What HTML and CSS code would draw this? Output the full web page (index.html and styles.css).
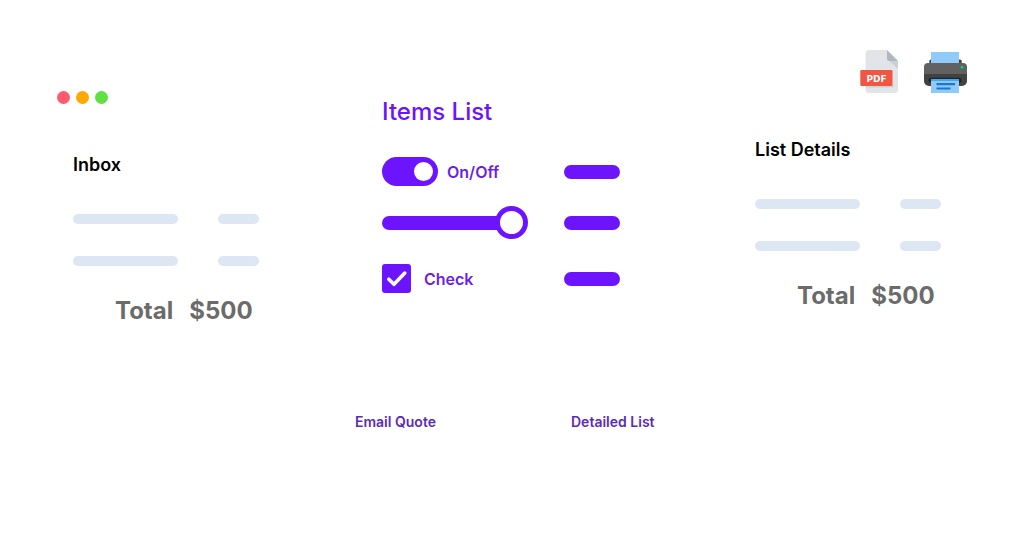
FILE: index.html
```html
<!DOCTYPE html>
<html lang="en">
<head>
<meta charset="utf-8">
<meta name="viewport" content="width=device-width, initial-scale=1">
<title>Items List</title>
<link rel="stylesheet" href="styles.css">
</head>
<body>
<main class="board">
  <section class="inbox">
    <div class="dots"><span class="dot dot-red"></span><span class="dot dot-amber"></span><span class="dot dot-green"></span></div>
    <div class="summary">
      <h2 class="summary-title">Inbox</h2>
      <div class="lines">
        <span class="line"></span><span class="line"></span>
        <span class="line"></span><span class="line"></span>
      </div>
      <p class="total"><span>Total</span><span>$500</span></p>
    </div>
  </section>

  <section class="items">
    <h1 class="items-title">Items List</h1>
    <div class="controls">
      <div class="control control-toggle">
        <input class="toggle" type="checkbox" role="switch" id="onoff" checked>
        <label class="label" for="onoff">On/Off</label>
        <span class="value"></span>
      </div>
      <div class="control control-slider">
        <input class="slider" type="range" aria-label="Amount" min="0" max="100" value="100">
        <span class="value"></span>
      </div>
      <div class="control control-check">
        <span class="checkwrap">
          <input class="check" type="checkbox" id="check" checked>
          <svg class="tick" viewBox="0 0 29 29" aria-hidden="true"><path d="M6.8 15.2 12 20.3 22.8 9"/></svg>
        </span>
        <label class="label" for="check">Check</label>
        <span class="value"></span>
      </div>
    </div>
    <nav class="links">
      <a class="link" href="#quote">Email Quote</a>
      <a class="link" href="#list">Detailed List</a>
    </nav>
  </section>

  <section class="details">
    <div class="actions">
      <button class="action" type="button" aria-label="Save as PDF">
        <svg width="38" height="43" viewBox="0 0 38 43">
          <path fill="#e2e5e7" d="M8 0h19l11 11v29a3 3 0 0 1-3 3H8.500a3 3 0 0 1-3-3V3A3 3 0 0 1 8 0z"/>
          <path fill="#cad1d8" d="M29 11h9v8z"/>
          <path fill="#b0b7bd" d="M27 0l11 11h-8.500a2.500 2.500 0 0 1-2.500-2.500z"/>
          <path fill="#cad1d8" d="M5.500 36h27v-2l1 0v2.500a1 1 0 0 1-1 1h-27z"/>
          <rect fill="#f15642" x=".3" y="20" width="32.200" height="16" rx="1.300"/>
          <text class="pdf-text" x="16.500" y="32" text-anchor="middle">PDF</text>
        </svg>
      </button>
      <button class="action" type="button" aria-label="Print">
        <svg width="43" height="43" viewBox="0 0 43 43">
          <path fill="#424242" d="M5.300 14V11q0-1.500 1.700-1.500h29q1.700 0 1.700 1.500v3z"/>
          <rect fill="#90caf9" x="7" y="2" width="28" height="12"/>
          <path fill="#424242" d="M0 23h43v8a5 5 0 0 1-5 5H5a5 5 0 0 1-5-5z"/>
          <path fill="#616161" d="M4 13h35a4 4 0 0 1 4 4v7H0v-7a4 4 0 0 1 4-4z"/>
          <path fill="#242424" d="M7 27.800h28q2.500 0 2.500 2.500T35 33H7q-2.500 0-2.500-2.700t2.500-2.500z"/>
          <circle fill="#00e676" cx="38" cy="17.300" r="1.200"/>
          <path fill="#90caf9" d="M7 29h28v14H7z"/>
          <path fill="#42a5f5" d="M7 29h28v2H7z"/>
          <path fill="#1976d2" d="M12.500 33h18.500v2.200H12.500zM12.500 37.400h14v2.200h-14z"/>
        </svg>
      </button>
    </div>
    <div class="summary">
      <h2 class="summary-title">List Details</h2>
      <div class="lines">
        <span class="line"></span><span class="line"></span>
        <span class="line"></span><span class="line"></span>
      </div>
      <p class="total"><span>Total</span><span>$500</span></p>
    </div>
  </section>
</main>
</body>
</html>
```
FILE: styles.css
```css
* { box-sizing: border-box; }

body {
  margin: 0;
  background: #fff;
  font-family: Inter, "Liberation Sans", sans-serif;
}

h1, h2, p { margin: 0; }
input { appearance: none; margin: 0; flex: none; }

.board {
  display: grid;
  grid-template-columns: 298fr 400fr 212fr;
  align-items: start;
  padding: 50px 44px 50px 57px;
}

/* Summary panels */
.inbox { padding: 41px 0 0; }
.inbox .summary { margin: 49px 0 0 16px; }

.dots { display: flex; gap: 6px; }
.dot { width: 13px; height: 13px; border-radius: 50%; }
.dot-red { background: #ff5a6e; }
.dot-amber { background: #ffa800; }
.dot-green { background: #62df43; }

.summary { max-width: 186px; }
.summary-title { font-size: 18px; line-height: 24px; font-weight: 600; color: #000; }

.lines {
  display: grid;
  grid-template-columns: 105fr 41fr;
  gap: 32px 40px;
  margin: 37px 0 29px;
}
.line { height: 10px; border-radius: 5px; background: #dde6f3; }

.total {
  display: flex;
  gap: 16px;
  padding-left: 42px;
  font-size: 24px;
  line-height: 32px;
  font-weight: 700;
  color: #6b6b6b;
}

.actions { display: flex; justify-content: flex-end; gap: 26px; margin-bottom: 45px; }
.action { display: flex; padding: 0; border: 0; background: none; cursor: pointer; }
.pdf-text { font: 700 9px "DejaVu Sans", sans-serif; fill: #fff; }

/* Items */
.items { padding-top: 46px; }
.items-title {
  padding-left: 27px;
  font-size: 24px;
  line-height: 32px;
  font-weight: 500;
  color: #6c14ff;
}

.controls { max-width: 265px; margin-top: 29px; padding-left: 27px; }
.control { display: flex; align-items: center; }
.control-slider { margin: 20px 0 25px; }
.label { font-size: 16px; line-height: 24px; font-weight: 600; color: #6a1fe8; }
.control-toggle .label { margin-left: 9px; }
.control-check .label { margin-left: 13px; }
.value {
  width: 56px;
  height: 14px;
  margin-left: auto;
  border-radius: 7px;
  background: #6c14ff;
}

.toggle {
  display: flex;
  align-items: center;
  justify-content: flex-end;
  width: 56px;
  height: 29px;
  padding: 0 5px;
  border-radius: 15px;
  background: #6c14ff;
}
.toggle::before { content: ""; width: 19px; height: 19px; border-radius: 50%; background: #fff; }
.toggle:not(:checked) { justify-content: flex-start; }

.slider { width: 146px; height: 33px; background: none; }
.slider::-webkit-slider-runnable-track {
  height: 14px;
  border-radius: 7px;
  background: linear-gradient(to right, #6c14ff 130px, transparent 130px);
}
.slider::-webkit-slider-thumb {
  appearance: none;
  width: 33px;
  height: 33px;
  margin-top: -10px;
  border: 5px solid #6c14ff;
  border-radius: 50%;
  background: #fff;
}

.checkwrap { position: relative; display: flex; }
.check { width: 29px; height: 29px; border-radius: 3px; background: #6c14ff; }
.tick {
  position: absolute;
  inset: 0;
  fill: none;
  stroke: #fff;
  stroke-width: 3.5;
  stroke-linecap: round;
  stroke-linejoin: round;
  pointer-events: none;
}
.check:not(:checked) + .tick { visibility: hidden; }

.links { display: grid; grid-template-columns: 54% 46%; margin-top: 119px; }
.link {
  font-size: 14px;
  line-height: 20px;
  font-weight: 600;
  color: #5b2bb8;
  text-decoration: none;
}
```
